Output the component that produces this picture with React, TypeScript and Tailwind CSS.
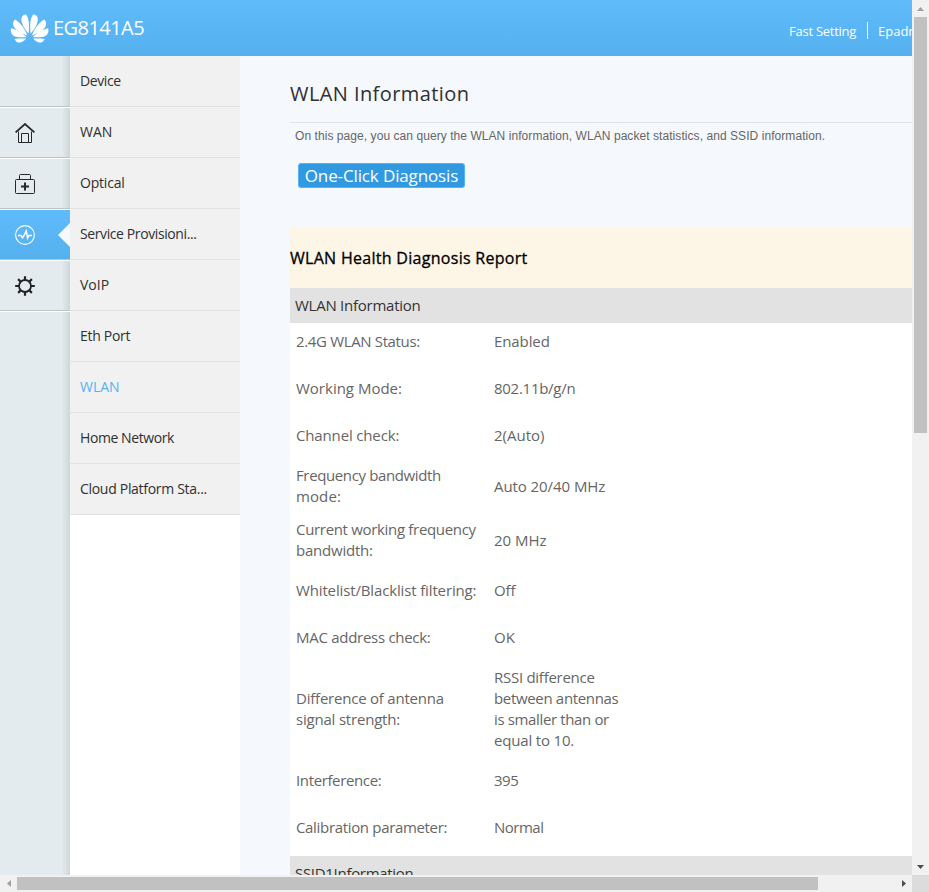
import React from "react";

const menu: { label: string; cls: string }[] = [
  { label: "Device", cls: "tracking-[-0.4px]" },
  { label: "WAN", cls: "" },
  { label: "Optical", cls: "tracking-[-0.2px]" },
  { label: "Service Provisioni...", cls: "tracking-[-0.4px]" },
  { label: "VoIP", cls: "" },
  { label: "Eth Port", cls: "tracking-[-0.3px]" },
  { label: "WLAN", cls: "" },
  { label: "Home Network", cls: "tracking-[-0.42px]" },
  { label: "Cloud Platform Sta...", cls: "tracking-[-0.3px]" },
];

type Line = [text: string, cls: string];

const rows: { label: Line[]; value: Line[]; h: string }[] = [
  { label: [["2.4G WLAN Status:", "tracking-[-0.35px]"]], value: [["Enabled", "tracking-[-0.1px]"]], h: "h-[37px] mb-[5px]" },
  { label: [["Working Mode:", ""]], value: [["802.11b/g/n", "tracking-[-0.27px]"]], h: "h-[47px]" },
  { label: [["Channel check:", "tracking-[-0.15px]"]], value: [["2(Auto)", ""]], h: "h-[47px]" },
  {
    label: [["Frequency bandwidth", "tracking-[-0.37px]"], ["mode:", "tracking-[0.1px]"]],
    value: [["Auto 20/40 MHz", "tracking-[-0.07px]"]],
    h: "h-[54px]",
  },
  {
    label: [["Current working frequency", "tracking-[-0.32px]"], ["bandwidth:", "tracking-[-0.22px]"]],
    value: [["20 MHz", ""]],
    h: "h-[54px]",
  },
  { label: [["Whitelist/Blacklist filtering:", "tracking-[-0.14px]"]], value: [["Off", "tracking-[-0.1px]"]], h: "h-[47px]" },
  { label: [["MAC address check:", "tracking-[-0.28px]"]], value: [["OK", ""]], h: "h-[47px]" },
  {
    label: [["Difference of antenna", "tracking-[-0.22px]"], ["signal strength:", "tracking-[-0.2px]"]],
    value: [
      ["RSSI difference", "tracking-[-0.27px]"],
      ["between antennas", "tracking-[-0.33px]"],
      ["is smaller than or", "tracking-[-0.36px]"],
      ["equal to 10.", "tracking-[-0.17px]"],
    ],
    h: "h-[96px]",
  },
  { label: [["Interference:", "tracking-[-0.37px]"]], value: [["395", "tracking-[-0.5px]"]], h: "h-[47px]" },
  { label: [["Calibration parameter:", "tracking-[-0.33px]"]], value: [["Normal", "tracking-[-0.5px]"]], h: "h-[47px]" },
];

function Petals() {
  return (
    <>
      <path d="M18.600 20.500C19.500 13 19.200 5 15.800 1.300C12.700 1.700 11.200 4 11.400 6.800C11.900 12 15 16.800 18.600 20.500Z" />
      <path d="M17.400 22.400C15 16.500 10.500 9.500 5 6.500C2.600 8.800 2.500 11.500 4 14C6.500 18 12 21 17.400 22.400Z" />
      <path d="M16.500 24C12 20 6.500 16 1 15.200C.2 18.500 1.200 21.500 4 23C7.500 24.700 12.500 24.500 16.500 24Z" />
      <path d="M16 25.500C12 25.300 8 25.400 4.500 25.900C5.800 28.400 7.500 29.800 10 29.500C12.500 29.200 14.500 27.400 16 25.500Z" />
    </>
  );
}

function Logo() {
  return (
    <svg width="40" height="32" viewBox="0 0 40 32" fill="#fff">
      <Petals />
      <g transform="matrix(-1 0 0 1 39.200 0)">
        <Petals />
      </g>
    </svg>
  );
}

const HomeIcon = () => (
  <svg width="20" height="20" viewBox="0 0 20 20" fill="none" stroke="#25292c">
    <path d="M.6 9.400L10 1L19.400 9.400" strokeWidth="1.800" />
    <path d="M3.500 8.500V19.500H16.500V8.500M6.500 19V10.500H13.500V19" />
  </svg>
);
const KitIcon = () => (
  <svg width="20" height="20" viewBox="0 0 20 20" fill="none" stroke="#25292c">
    <rect x=".5" y="5.500" width="19" height="14" rx="1" />
    <path d="M4.500 5.500V1.500Q4.500.5 5.500.5H14.500Q15.500.5 15.500 1.500V5.500" />
    <path d="M10 8.500V16.500M6 12.500H14" strokeWidth="2" />
  </svg>
);
const PulseIcon = () => (
  <svg width="20" height="20" viewBox="0 0 20 20" fill="none" stroke="#fff">
    <circle cx="10" cy="10" r="9.400" strokeWidth="1.100" />
    <path d="M3 10.500H6L7.500 12.800L9.300 10L11.200 6L12.600 13L14 10.500H17" strokeWidth="1.500" />
  </svg>
);
const GearIcon = () => (
  <svg width="20" height="20" viewBox="0 0 20 20" fill="none" stroke="#202427">
    <circle cx="10" cy="10" r="6" strokeWidth="1.800" />
    <path
      d="M10 .2V4M10 16V19.800M.2 10H4M16 10H19.800M3.100 3.100L5.800 5.800M14.200 14.200L16.900 16.900M3.100 16.900L5.800 14.200M14.200 5.800L16.900 3.100"
      strokeWidth="2.200"
    />
  </svg>
);

function RailCell({ active, children }: { active?: boolean; children?: React.ReactNode }) {
  return (
    <div
      className={
        active
          ? "relative flex h-[51px] items-center border-t border-b border-t-white border-b-[#b9c2c7] bg-linear-to-b from-[#5fbbfb] to-[#55b0ee] pl-[15px]"
          : "flex h-[51px] items-center border-t border-b border-t-white border-b-[#bcc4c8] pl-[15px]"
      }
    >
      {children}
      {active && (
        <svg className="absolute top-[12px] right-0" width="13" height="26" viewBox="0 0 13 26">
          <path d="M13 1V25L1 13Z" fill="#f5f9fe" />
        </svg>
      )}
    </div>
  );
}

export default function App() {
  return (
    <div className="flex h-[892px] w-[929px] flex-col overflow-hidden bg-[#f5f8fd] font-['Open_Sans','Noto_Sans',sans-serif]">
      <div className="flex h-[875px]">
        <div className="flex w-[912px] flex-col overflow-hidden">
          <header className="flex h-[56px] shrink-0 items-center bg-linear-to-b from-[#5fbbfb] to-[#55b0ee] pl-[10px] text-white">
            <div className="pt-[2px]">
              <Logo />
            </div>
            <span className="ml-[3px] text-[20px] leading-[28px] tracking-[-0.55px]">EG8141A5</span>
            <div className="ml-auto flex w-[123px] shrink-0 items-center overflow-hidden pt-[5px] text-[13px] leading-[18px] whitespace-nowrap">
              <span className="w-[78px] shrink-0 tracking-[-0.25px]">Fast Setting</span>
              <span className="h-[17px] w-px shrink-0 bg-white" />
              <span className="ml-[10px]">Epadmin</span>
            </div>
          </header>
          <div className="flex h-[819px]">
            <nav className="w-[70px] shrink-0 bg-[#e4ebee] bg-linear-to-r from-transparent from-88% to-[#cfd6da]">
              <div className="h-[51px] border-b border-[#bcc4c8]" />
              <RailCell><HomeIcon /></RailCell>
              <RailCell><KitIcon /></RailCell>
              <RailCell active><PulseIcon /></RailCell>
              <RailCell><GearIcon /></RailCell>
              <div className="h-px bg-white" />
            </nav>
            <aside className="w-[170px] shrink-0 bg-white">
              {menu.map((m) => (
                <div
                  key={m.label}
                  className={`flex h-[51px] items-center border-b border-[#e2e2e2] bg-[#f1f1f1] pl-[10px] text-[14px] leading-[20px] whitespace-nowrap ${m.label === "WLAN" ? "text-[#56b2f0]" : "text-[#303030]"} ${m.cls}`}
                >
                  {m.label}
                </div>
              ))}
            </aside>
            <main className="flex w-[672px] flex-col overflow-hidden pl-[50px]">
              <h1 className="h-[67px] shrink-0 border-b border-[#e2e3e5] pt-[24px] text-[20px] leading-[28px] tracking-[0.42px] text-[#303030]">WLAN Information</h1>
              <p className="h-[40px] shrink-0 pt-[5px] pl-[5px] font-['Liberation_Sans',sans-serif] text-[12px] leading-[16px] tracking-[0.062px] whitespace-nowrap text-[#666]">
                On this page, you can query the WLAN information, WLAN packet statistics, and SSID information.
              </p>
              <button className="ml-[8px] flex h-[25px] w-[167px] shrink-0 items-center justify-center rounded-[3px] border border-[#56b2f8] bg-[#3099df] text-[17px] leading-[22px] tracking-[-0.13px] whitespace-nowrap text-white">
                One-Click Diagnosis
              </button>
              <h2 className="mt-[40px] flex h-[60px] shrink-0 items-center bg-[#fdf5e6] text-[16px] tracking-[0.29px] whitespace-nowrap text-black [-webkit-text-stroke:0.3px_#000]">WLAN Health Diagnosis Report</h2>
              <div className="flex h-[35px] shrink-0 items-center bg-[#e2e2e2] pl-[5px] text-[15px] tracking-[-0.25px] text-[#333]">WLAN Information</div>
              <div className="h-[533px] shrink-0 bg-white">
                {rows.map((r) => (
                  <div key={r.label[0][0]} className={`flex items-center pl-[6px] text-[15px] leading-[21px] whitespace-nowrap text-[#666] ${r.h}`}>
                    <div className="w-[198px]">{r.label.map(([t, c]) => <div key={t} className={c}>{t}</div>)}</div>
                    <div>{r.value.map(([t, c]) => <div key={t} className={c}>{t}</div>)}</div>
                  </div>
                ))}
              </div>
              <div className="flex h-[35px] shrink-0 items-center bg-[#e2e2e2] pl-[5px] text-[15px] tracking-[-0.3px] text-[#333]">SSID1Information</div>
            </main>
          </div>
        </div>
        <div className="flex w-[17px] flex-col items-center bg-[#f1f1f1]">
          <div className="flex h-[17px] shrink-0 items-center">
            <svg width="7" height="4" viewBox="0 0 7 4"><path d="M0 4L3.500 0L7 4Z" fill="#a0a0a0" /></svg>
          </div>
          <div className="h-[416px] w-[13px] shrink-0 bg-[#c1c1c1]" />
          <div className="mt-auto flex h-[17px] items-center">
            <svg width="7" height="4" viewBox="0 0 7 4"><path d="M0 0L3.500 4L7 0Z" fill="#4d4d4d" /></svg>
          </div>
        </div>
      </div>
      <div className="flex h-[17px]">
        <div className="flex w-[912px] items-center bg-[#f1f1f1]">
          <div className="flex w-[17px] justify-center">
            <svg width="4" height="7" viewBox="0 0 4 7"><path d="M4 0L0 3.500L4 7Z" fill="#a0a0a0" /></svg>
          </div>
          <div className="h-[13px] w-[801px] bg-[#c1c1c1]" />
          <div className="ml-auto flex w-[17px] justify-center">
            <svg width="4" height="7" viewBox="0 0 4 7"><path d="M0 0L4 3.500L0 7Z" fill="#4d4d4d" /></svg>
          </div>
        </div>
        <div className="w-[17px] bg-[#dcdcdc]" />
      </div>
    </div>
  );
}
